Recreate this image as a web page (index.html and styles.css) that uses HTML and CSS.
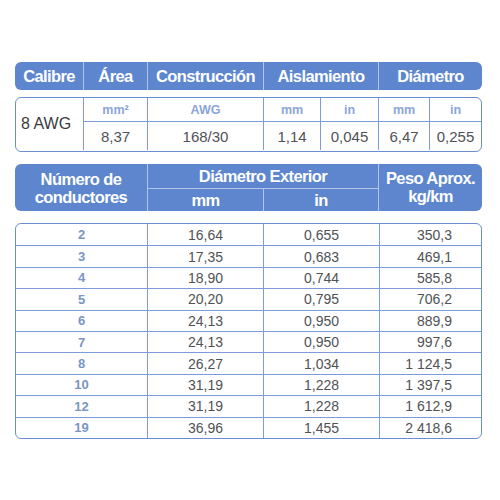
FILE: index.html
```html
<!DOCTYPE html>
<html>
  <head>
    <title>Cable 8 AWG</title>
    <link rel="stylesheet" href="styles.css">
  </head>
  <body>
    <div class="sheet">
      <div class="head head-top">
        <div class="hcell">Calibre</div>
        <div class="hcell">Área</div>
        <div class="hcell">Construcción</div>
        <div class="hcell">Aislamiento</div>
        <div class="hcell">Diámetro</div>
      </div>

      <div class="box box-spec">
        <div class="cell gauge">8 AWG</div>
        <div class="cell unit">mm²</div>
        <div class="cell unit">AWG</div>
        <div class="cell unit">mm</div>
        <div class="cell unit">in</div>
        <div class="cell unit">mm</div>
        <div class="cell unit">in</div>
        <div class="cell val">8,37</div>
        <div class="cell val">168/30</div>
        <div class="cell val">1,14</div>
        <div class="cell val">0,045</div>
        <div class="cell val">6,47</div>
        <div class="cell val">0,255</div>
      </div>

      <div class="head head-bottom">
        <div class="hcell count">Número de<br>conductores</div>
        <div class="hcell outer">Diámetro Exterior</div>
        <div class="hcell weight">Peso Aprox.<br>kg/km</div>
        <div class="hcell sub">mm</div>
        <div class="hcell sub">in</div>
      </div>

      <table class="box data">
        <tr><td class="n">2</td><td>16,64</td><td>0,655</td><td class="w">350,3</td></tr>
        <tr><td class="n">3</td><td>17,35</td><td>0,683</td><td class="w">469,1</td></tr>
        <tr><td class="n">4</td><td>18,90</td><td>0,744</td><td class="w">585,8</td></tr>
        <tr><td class="n">5</td><td>20,20</td><td>0,795</td><td class="w">706,2</td></tr>
        <tr><td class="n">6</td><td>24,13</td><td>0,950</td><td class="w">889,9</td></tr>
        <tr><td class="n">7</td><td>24,13</td><td>0,950</td><td class="w">997,6</td></tr>
        <tr><td class="n">8</td><td>26,27</td><td>1,034</td><td class="w">1 124,5</td></tr>
        <tr><td class="n">10</td><td>31,19</td><td>1,228</td><td class="w">1 397,5</td></tr>
        <tr><td class="n">12</td><td>31,19</td><td>1,228</td><td class="w">1 612,9</td></tr>
        <tr><td class="n">19</td><td>36,96</td><td>1,455</td><td class="w">2 418,6</td></tr>
      </table>
    </div>
  </body>
</html>
```

FILE: styles.css
```css
body {
  margin: 0;
  background: #fff;
  font-family: "Liberation Sans", Arial, sans-serif;
  color: #505256;
}

.sheet {
  width: 467px;
  padding: 62px 0 0 15px;
}

.head {
  display: grid;
  background-color: #5d86cf;
  border-radius: 6px;
  color: #fff;
  font-family: "Liberation Sans", Arial, sans-serif;
  font-weight: bold;
  font-size: 16.5px;
  letter-spacing: -0.6px;
}
.hcell {
  display: flex;
  align-items: center;
  justify-content: center;
  text-align: center;
  border-left: 1px solid #b3c6ea;
}
.hcell:first-child {
  border-left: none;
}

.head-top {
  grid-template-columns: 68px 64px 116px 115px 104px;
  height: 28px;
}

.box {
  border: 1.5px solid #6b8ed2;
  border-radius: 6px;
  box-sizing: border-box;
}

.box-spec {
  display: grid;
  grid-template-columns: 67px 64px 116px 57px 58px 51px 52px;
  grid-template-rows: 24px 28px;
  margin-top: 7px;
  height: 55px;
}
.cell {
  display: flex;
  align-items: center;
  justify-content: center;
  border-left: 1px solid #7c9bd8;
}
.gauge {
  grid-row: 1 / 3;
  border-left: none;
  justify-content: flex-start;
  padding-left: 5px;
  font-size: 16px;
  color: #3a3b3e;
}
.unit {
  color: #8aa6d9;
  font-weight: bold;
  font-size: 12.5px;
  border-bottom: 1px solid #7c9bd8;
}
.val {
  font-size: 15px;
}

.head-bottom {
  grid-template-columns: 132px 116px 115px 104px;
  grid-template-rows: 25px 22px;
  margin-top: 12px;
  height: 47px;
  line-height: 18px;
}
.count {
  grid-row: 1 / 3;
}
.outer {
  grid-column: 2 / 4;
  border-bottom: 1px solid #b3c6ea;
}
.weight {
  grid-column: 4;
  grid-row: 1 / 3;
  padding-bottom: 2px;
}
.sub {
  grid-row: 2;
}
.head-bottom .sub:nth-of-type(4) {
  grid-column: 2;
}

.data {
  width: 467px;
  margin-top: 12px;
  border-collapse: separate;
  border-spacing: 0;
  font-size: 14px;
}
.data td {
  height: 21.4px;
  padding: 0;
  text-align: center;
  border-left: 1px solid #7c9bd8;
  border-top: 1px solid #7c9bd8;
  box-sizing: border-box;
}
.data tr:first-child td {
  border-top: none;
}
.data td:first-child {
  border-left: none;
  width: 131px;
}
.data td:nth-child(2),
.data td:nth-child(3) {
  width: 116px;
}
.data .n {
  color: #7b95c6;
  font-weight: bold;
  font-size: 13px;
}
.data .w {
  text-align: right;
  padding-right: 29px;
}
```
